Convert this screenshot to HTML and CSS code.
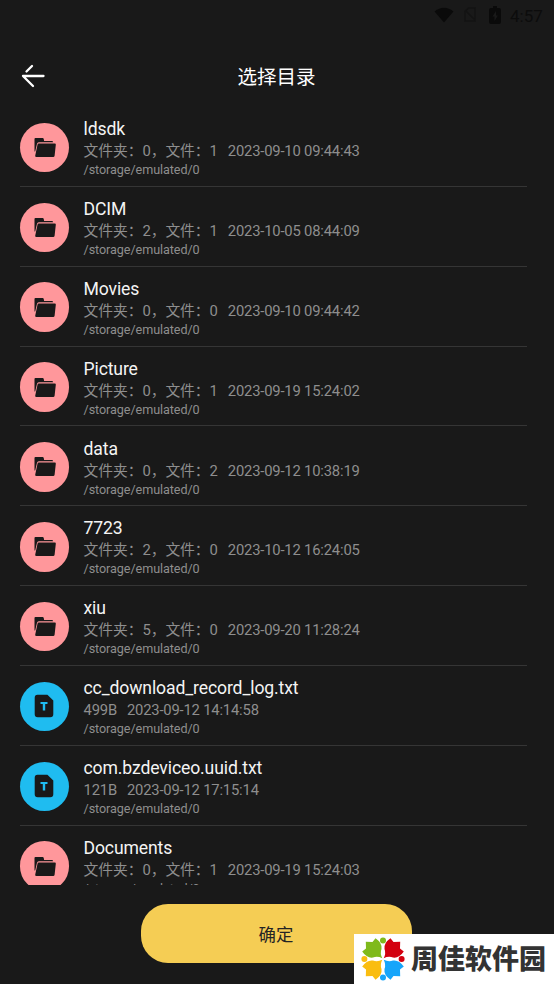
FILE: index.html
```html
<!DOCTYPE html>
<html lang="zh-CN">
<head>
<meta charset="utf-8">
<title>选择目录</title>
<link rel="stylesheet" href="styles.css">
</head>
<body>
<svg class="defs" aria-hidden="true">
  <symbol id="folder" viewBox="0 0 23 21">
    <path d="M1.500 14.500V1.900Q1.500 1 2.400 1H9.600Q10.600 1 10.800 2.200L11.100 4H18.800Q20 4 20.200 5.200H5.800Q4.400 5.200 4 6.800L2.200 14.500Z"/>
    <path d="M5.800 6.600H21.800Q23 6.600 22.800 7.800L21.600 18.800Q21.400 20 20.200 20H3.400Q2 20 2.200 18.800L4.500 7.800Q4.800 6.600 5.800 6.600Z"/>
  </symbol>
  <symbol id="textfile" viewBox="0 0 20 24">
    <path fill-rule="evenodd" d="M3.500.7H13.400L19.300 6.600V20.200Q19.300 23.200 16.300 23.200H3.700Q.7 23.200.7 20.200V3.700Q.7.700 3.500.700ZM6.500 8V10H8.800V16.500H11.200V10H13.500V8Z"/>
  </symbol>
  <symbol id="petal" viewBox="0 0 44 44">
    <path d="M21.300 21.300Q18.800 16.500 20.500 12Q21.500 6 14.500 1.200L11.500 5L4.800 4.800L5 11.500L1.200 14.500Q6 21.500 12 20.500Q16.500 18.800 21.300 21.300Z"/>
    <circle cx="22" cy="3.400" r="3"/>
  </symbol>
</svg>
<div class="screen">
  <div class="status">
    <svg class="wifi" viewBox="0 0 20 16"><path d="M.5 4.500Q10-3 19.500 4.500L10 15.500Z"/></svg>
    <svg class="sim" viewBox="0 0 12 15"><path d="M1 4.500L4.500 1H11V14H1ZM1 3L11 13"/></svg>
    <svg class="battery" viewBox="0 0 12 18"><path fill-rule="evenodd" d="M4 0H8V2H10Q12 2 12 4V16Q12 18 10 18H2Q0 18 0 16V4Q0 2 2 2H4ZM7 5L3.500 10.500H5.500V15L8.800 9.500H7Z"/></svg>
    <span class="clock">4:57</span>
  </div>
  <header class="header">
    <svg class="back" viewBox="0 0 24 24"><path d="M11 2L5.500 7.500M2 12H22.500M2 12L12 22"/></svg>
    <h1 class="heading">选择目录</h1>
  </header>
  <main class="list">
    <div class="row"><span class="icon"><svg class="folder"><use href="#folder"/></svg></span><div class="info"><div class="name">ldsdk</div><div class="meta"><span class="count">文件夹：0，文件：1</span><span>2023-09-10 09:44:43</span></div><div class="path">/storage/emulated/0</div></div></div>
    <div class="row"><span class="icon"><svg class="folder"><use href="#folder"/></svg></span><div class="info"><div class="name">DCIM</div><div class="meta"><span class="count">文件夹：2，文件：1</span><span>2023-10-05 08:44:09</span></div><div class="path">/storage/emulated/0</div></div></div>
    <div class="row"><span class="icon"><svg class="folder"><use href="#folder"/></svg></span><div class="info"><div class="name">Movies</div><div class="meta"><span class="count">文件夹：0，文件：0</span><span>2023-09-10 09:44:42</span></div><div class="path">/storage/emulated/0</div></div></div>
    <div class="row"><span class="icon"><svg class="folder"><use href="#folder"/></svg></span><div class="info"><div class="name">Picture</div><div class="meta"><span class="count">文件夹：0，文件：1</span><span>2023-09-19 15:24:02</span></div><div class="path">/storage/emulated/0</div></div></div>
    <div class="row"><span class="icon"><svg class="folder"><use href="#folder"/></svg></span><div class="info"><div class="name">data</div><div class="meta"><span class="count">文件夹：0，文件：2</span><span>2023-09-12 10:38:19</span></div><div class="path">/storage/emulated/0</div></div></div>
    <div class="row"><span class="icon"><svg class="folder"><use href="#folder"/></svg></span><div class="info"><div class="name">7723</div><div class="meta"><span class="count">文件夹：2，文件：0</span><span>2023-10-12 16:24:05</span></div><div class="path">/storage/emulated/0</div></div></div>
    <div class="row"><span class="icon"><svg class="folder"><use href="#folder"/></svg></span><div class="info"><div class="name">xiu</div><div class="meta"><span class="count">文件夹：5，文件：0</span><span>2023-09-20 11:28:24</span></div><div class="path">/storage/emulated/0</div></div></div>
    <div class="row"><span class="icon icon-file"><svg class="textfile"><use href="#textfile"/></svg></span><div class="info"><div class="name">cc_download_record_log.txt</div><div class="meta"><span>499B</span><span>2023-09-12 14:14:58</span></div><div class="path">/storage/emulated/0</div></div></div>
    <div class="row"><span class="icon icon-file"><svg class="textfile"><use href="#textfile"/></svg></span><div class="info"><div class="name">com.bzdeviceo.uuid.txt</div><div class="meta"><span>121B</span><span>2023-09-12 17:15:14</span></div><div class="path">/storage/emulated/0</div></div></div>
    <div class="row"><span class="icon"><svg class="folder"><use href="#folder"/></svg></span><div class="info"><div class="name">Documents</div><div class="meta"><span class="count">文件夹：0，文件：1</span><span>2023-09-19 15:24:03</span></div><div class="path">/storage/emulated/0</div></div></div>
  </main>
  <footer class="footer"><button class="confirm">确定</button></footer>
  <div class="watermark">
    <svg class="logo" viewBox="0 0 44 44">
      <g fill="#7fba1c"><use href="#petal" width="44" height="44"/></g>
      <g fill="#d3000f" transform="rotate(90 22 22)"><use href="#petal" width="44" height="44"/></g>
      <g fill="#16a5fa" transform="rotate(180 22 22)"><use href="#petal" width="44" height="44"/></g>
      <g fill="#fabd10" transform="rotate(270 22 22)"><use href="#petal" width="44" height="44"/></g>
    </svg>
    <span class="brand">周佳软件园</span>
  </div>
</div>
</body>
</html>
```
FILE: styles.css
```css
* { box-sizing: border-box; }
body { margin: 0; background: #191919; font-family: Roboto, "Noto Sans CJK SC", sans-serif; }
.defs { position: absolute; width: 0; height: 0; }
.screen { position: relative; width: 554px; height: 984px; overflow: hidden; display: flex; flex-direction: column; background: #191919; }
.status { height: 46px; flex: none; display: flex; align-items: flex-start; padding: 7px 10px 0 434px; color: #0c0c0c; fill: #0a0a0a; }
.wifi { width: 20px; height: 16px; }
.sim { width: 12px; height: 15px; margin-left: 10px; fill: none; stroke: #131313; stroke-width: 1.5; }
.battery { width: 12px; height: 18px; margin-left: 13px; margin-top: -1px; }
.clock { margin-left: 9px; font-size: 17px; line-height: 18px; }
.header { height: 61px; flex: none; position: relative; display: flex; align-items: center; justify-content: center; }
.back { position: absolute; left: 20.5px; top: 18px; width: 24px; height: 24px; fill: none; stroke: #fff; stroke-width: 2.3; stroke-linecap: round; }
.heading { margin: 2px 1px 0 0; font-size: 19.5px; font-weight: 400; line-height: 30px; color: #fff; }
.list { height: 778px; flex: none; overflow: hidden; padding: 0 27px 0 19.5px; }
.row { height: 79.85px; display: flex; border-bottom: 1px solid #353535; }
.icon { flex: none; width: 49.5px; height: 49.5px; margin-top: 15.8px; border-radius: 50%; background: #ff979b; display: flex; align-items: center; justify-content: center; fill: #191919; }
.icon-file { background: #1fbcf0; }
.folder { width: 23px; height: 21px; }
.textfile { width: 20px; height: 24px; }
.info { margin-left: 14.5px; padding-top: 11.2px; white-space: nowrap; }
.name { font-size: 17.6px; letter-spacing: -.12px; line-height: 22px; color: #f4f4f4; }
.meta { display: flex; gap: 10px; font-size: 14.8px; letter-spacing: -.19px; line-height: 22px; color: #8e8e8e; }
.count { letter-spacing: -.07px; }
.path { font-size: 12.6px; letter-spacing: -.07px; line-height: 16px; color: #8e8e8e; }
.footer { display: flex; justify-content: center; padding: 19.2px 2px 0 0; }
.confirm { width: 271px; height: 59px; border: 0; border-radius: 27px; background: #f5cd54; color: #242424; font: 400 17.4px/59px Roboto, "Noto Sans CJK SC", sans-serif; padding: 2px 0 0; }
.watermark { position: absolute; left: 354px; top: 934px; width: 200px; height: 50px; background: #fff; display: flex; align-items: center; padding-left: 7px; }
.logo { width: 44px; height: 44px; flex: none; }
.brand { margin: -2px 0 0 6px; font: 900 27px/40px "Noto Sans CJK SC", sans-serif; color: #333; white-space: nowrap; }
```
